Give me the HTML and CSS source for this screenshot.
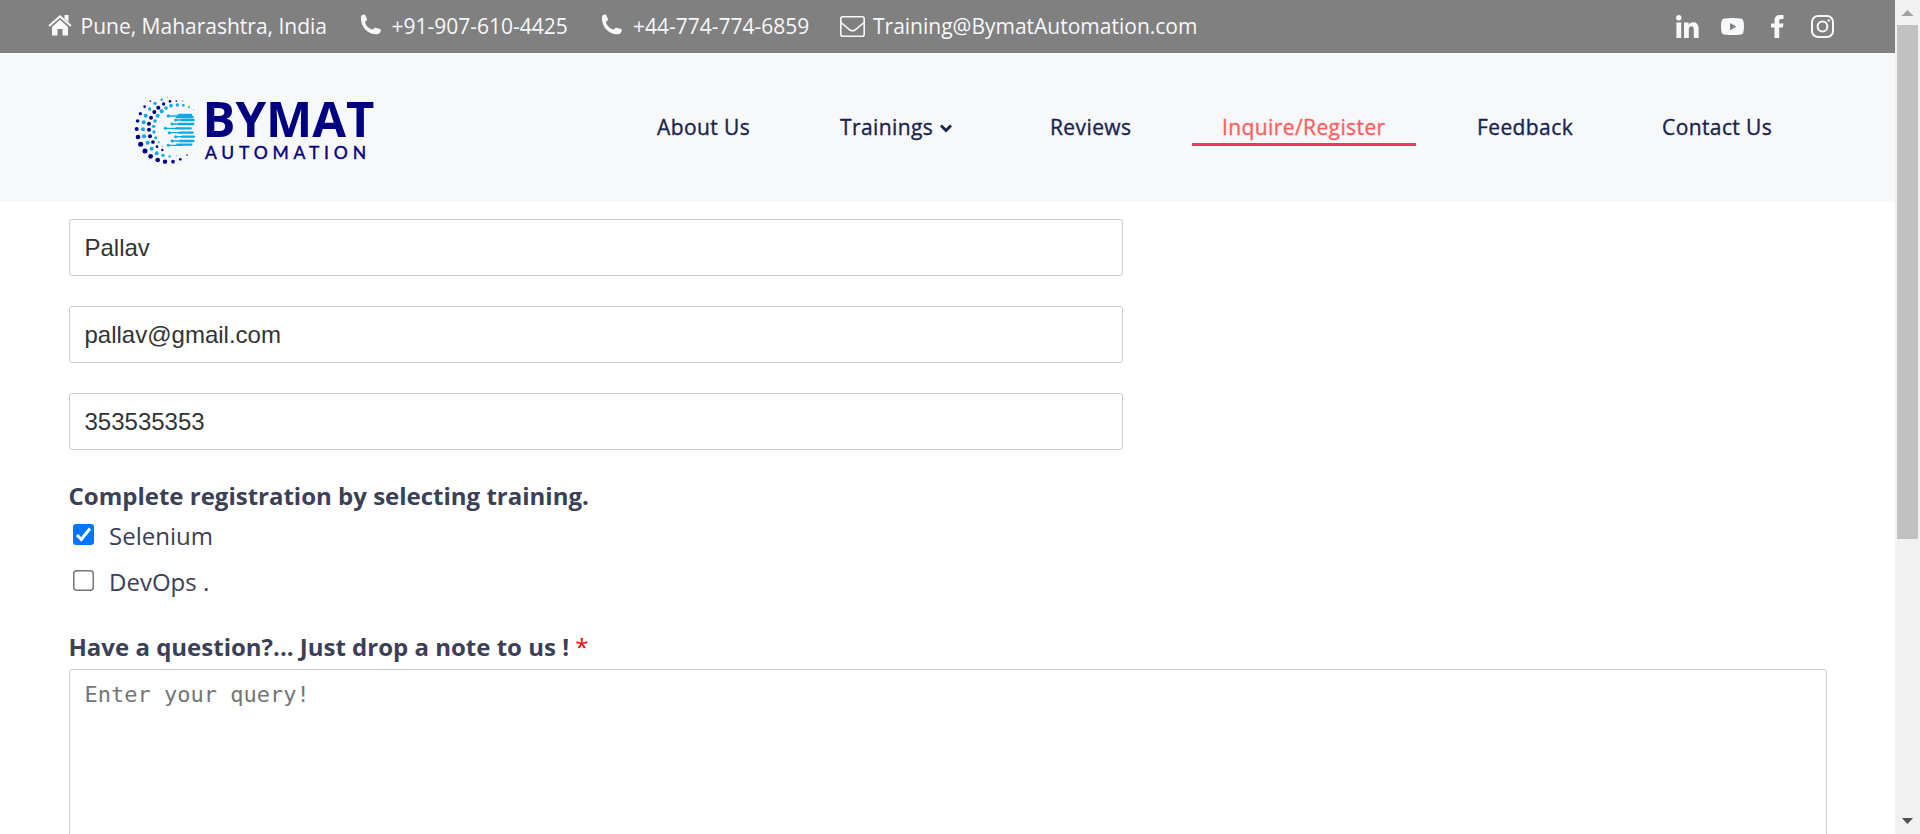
FILE: index.html
```html
<!DOCTYPE html>
<html lang="en">
<head>
<meta charset="utf-8">
<title>Bymat Automation - Inquire/Register</title>
<link rel="stylesheet" href="styles.css">
</head>
<body>
<div class="page">
  <main class="content">
    <div class="topbar">
      <span class="info i-home"><svg width="24" height="22" viewBox="0 0 24 22"><path d="M1 12 12 2.400 23 12" fill="none" stroke="currentColor" stroke-width="2"/><path d="M16.500 1h4v7l-4-3.500zM4 13l8-7.200L20 13v8.500h-5.500V15h-5v6.500H4z" fill="currentColor"/></svg><span>Pune, Maharashtra, India</span></span>
      <span class="info i-tel1"><svg width="21" height="25" viewBox="0 0 21 25"><path d="M1 3.500C1 1 4 0 5 1l2 5C7.200 8 4.800 8.500 5 10c1 4 4 7.200 7 8.400 1.500.4 1.700-2.400 3.500-2.100l4.700 1.700c1.500 1.400 0 5-2 5.800C9 26 0 15 1 3.500z" fill="currentColor"/></svg><span>+91-907-610-4425</span></span>
      <span class="info i-tel2"><svg width="21" height="25" viewBox="0 0 21 25"><path d="M1 3.500C1 1 4 0 5 1l2 5C7.200 8 4.800 8.500 5 10c1 4 4 7.200 7 8.400 1.500.4 1.700-2.400 3.500-2.100l4.700 1.700c1.500 1.400 0 5-2 5.800C9 26 0 15 1 3.500z" fill="currentColor" transform="scale(1 .84)"/></svg><span>+44-774-774-6859</span></span>
      <span class="info i-mail"><svg width="25" height="21" viewBox="0 0 25 21"><rect x=".8" y=".8" width="23.400" height="19.400" rx="2" fill="none" stroke="currentColor" stroke-width="1.600"/><path d="M1 6.500 10 14q2.500 1.600 5 0l9-7.500" fill="none" stroke="currentColor" stroke-width="1.600"/></svg><span>Training@BymatAutomation.com</span></span>
      <div class="social">
        <svg width="23" height="23" viewBox="0 0 23 23" fill="currentColor"><circle cx="2.800" cy="2.800" r="2.700"/><path d="M.4 7.500h4.800V23H.4zM8 7.500h4.600v2.200c2-3.500 10-4 10 3.800V23h-4.800v-8.400c0-4.600-5-4-5 0V23H8z"/></svg>
        <svg width="23" height="17" viewBox="0 0 23 17"><path fill="currentColor" fill-rule="evenodd" d="M3 .5q8.500-1 17 0 3 0 3 8t-3 8q-8.500 1-17 0-3 0-3-8t3-8zM9 5v7.200l6.400-3.600z"/></svg>
        <svg width="13" height="23" viewBox="0 0 13 23"><path fill="currentColor" d="M3.500 23V12.500H0v-4h3.500V5.500C3.500 2 5.500 0 9 0h3.500v4h-2.300C8.400 4 8.200 5 8.200 6v2.500h4.300l-.6 4H8.200V23z"/></svg>
        <svg width="23" height="23" viewBox="0 0 23 23" fill="none" stroke="currentColor" stroke-width="2"><rect x="1" y="1" width="21" height="21" rx="6"/><circle cx="11.500" cy="11.500" r="4.900"/><circle cx="17.700" cy="5.500" r="1.300" fill="currentColor" stroke="none"/></svg>
      </div>
    </div>
    <header class="header">
      <svg class="logo" width="246" height="76" viewBox="0 0 246 76">
        <g transform="scale(.3333) translate(-12 0)">
          <g id="dots"></g>
          <g class="chip">
            <path class="thin" d="M115 72h40M137 84h30M126 96h30M106 109h50M118 122h40M137 134h30M126 147h30M115 160h40"/>
            <path class="thick" d="M147 69h36M140 75h48M155 84h36M146 96h44M140 109h42M148 122h40M156 134h36M150 147h40M142 158h42"/>
          </g>
        </g>
        <text class="brand" x="68.500" y="45" textLength="172" lengthAdjust="spacingAndGlyphs">BYMAT</text>
        <text class="sub" x="71" y="67" textLength="161">AUTOMATION</text>
      </svg>
      <nav class="nav">
        <a>About Us</a>
        <a>Trainings<svg class="chev" width="12" height="9" viewBox="0 0 12 9"><path d="m1 1.500 5 5 5-5" fill="none" stroke="currentColor" stroke-width="2.800"/></svg></a>
        <a>Reviews</a>
        <a class="active">Inquire/Register</a>
        <a>Feedback</a>
        <a>Contact Us</a>
      </nav>
    </header>
    <form class="form">
      <input class="field" type="text" value="Pallav">
      <input class="field" type="text" value="pallav@gmail.com">
      <input class="field" type="text" value="353535353">
      <div class="title">Complete registration by selecting training.</div>
      <label class="option"><svg width="21" height="21" viewBox="0 0 21 21"><rect width="21" height="21" rx="3" fill="#0075ff"/><path d="m4 11 4.300 4.500L17 4.500" fill="none" stroke="#fff" stroke-width="3"/></svg>Selenium</label>
      <label class="option"><svg width="21" height="21" viewBox="0 0 21 21"><rect x=".75" y=".75" width="19.500" height="19.500" rx="3" fill="#fff" stroke="#767676" stroke-width="1.500"/></svg>DevOps .</label>
      <div class="title t2">Have a question?... Just drop a note to us ! <span class="req">*</span></div>
      <textarea class="query" placeholder="Enter your query!"></textarea>
    </form>
  </main>
  <div class="scroll">
    <svg width="25" height="25" viewBox="0 0 25 25"><path d="M6.500 16h12L12.500 10z" fill="#a0a0a0"/></svg>
    <div class="thumb"></div>
    <svg class="down" width="25" height="25" viewBox="0 0 25 25"><path d="M7 9h11l-5.500 6z" fill="#4f4f4f"/></svg>
  </div>
</div>
<script src="logo.js"></script>
</body>
</html>
```
FILE: styles.css
```css
* { box-sizing: border-box; }
body { margin: 0; overflow: hidden; background: #fff; font-family: "Open Sans", sans-serif; }
.page { display: flex; width: 1920px; height: 834px; overflow: hidden; }
.content { width: 1895px; height: 834px; overflow: hidden; }
.topbar { display: flex; height: 53px; padding-left: 48px; background: #808080; color: #f7f8fa; font-size: 21px; line-height: 53px; }
.info { display: flex; align-items: center; white-space: nowrap; }
.info svg { flex: none; }
.i-home { width: 312px; gap: 8.5px; }
.i-tel1 { width: 241px; gap: 10.5px; }
.i-tel2 { width: 239px; gap: 11px; }
.i-mail { gap: 8px; }
.i-tel1 svg, .i-tel2 svg { height: 21px; margin-bottom: 5px; }
.i-home svg { margin-bottom: 4px; }
.i-mail svg { margin-bottom: 1px; }
.social { display: flex; align-items: center; margin-left: auto; padding-right: 61px; }
.social svg:nth-child(2) { margin-left: 22px; }
.social svg:nth-child(3) { margin-left: 27px; }
.social svg:nth-child(4) { margin-left: 27px; }
.header { display: flex; height: 149px; background: #f7f8fa; }
.logo { flex: none; margin: 39px 0 0 134px; overflow: visible; }
.chip { fill: none; stroke: #0fa9e6; stroke-linecap: round; }
.thin { stroke-width: 4; }
.thick { stroke-width: 7; }
.brand { font: 700 49px "Open Sans", sans-serif; fill: #000080; }
.sub { font: 400 17.5px Lato, sans-serif; fill: #000080; stroke: #000080; stroke-width: .4px; }
.nav { display: grid; grid-template-columns: 183px 210px 172px 255px 185px 150px; align-items: center; height: 147px; margin-left: 277px; font-size: 21px; letter-spacing: .4px; color: #17234e; -webkit-text-stroke: .35px currentColor; }
.nav a { white-space: nowrap; line-height: 30px; }
.chev { margin-left: 7px; vertical-align: 2px; }
.active { position: relative; color: #ff5f5f; }
.active::after { content: ""; position: absolute; left: -30px; top: 31px; width: 224px; height: 3px; background: #ff2f64; }
.form { display: flex; flex-direction: column; padding: 17px 68px 0 69px; color: #3b4057; }
.field { width: 1054px; height: 57px; margin-bottom: 30px; padding: 0 14.5px; border: 1px solid #ccc; border-radius: 3px; font: 24px "Liberation Sans", Arial, sans-serif; color: #333; outline: none; }
.title { margin-left: -.5px; font-size: 24px; font-weight: 700; line-height: 32px; white-space: nowrap; }
.option { display: flex; align-items: center; height: 46px; gap: 15px; padding-left: 4px; font-size: 24px; }
.option svg { margin-bottom: 2px; }
.t2 { margin-top: 27px; }
.req { color: #f00; font-weight: 400; }
.query { width: 1758px; height: 180px; margin-top: 6px; padding: 9px 14.5px; border: 1px solid #ccc; border-radius: 3px; font: 22px/32px "DejaVu Sans Mono", monospace; resize: none; overflow: hidden; }
.query::placeholder { color: #757575; }
.scroll { display: flex; flex-direction: column; align-items: center; width: 25px; background: #f1f1f1; }
.scroll svg { flex: none; }
.thumb { width: 21px; height: 514px; background: #c1c1c1; }
.down { margin-top: auto; }
#dots { stroke: none; }
.i-tel1 path { transform: scale(1, .84); }
.i-tel1 svg, .i-tel2 svg { overflow: hidden; height: 25px; margin-bottom: 1px; }
```
FILE: logo.js
```javascript
// Each dot is [x, y, radius]; sizes taper towards the ends of every arc.
const navy = [
  [61,27,2.5],[44,44,4],[31,65,5],[23,87,5.5],[20,111,6],[24,135,7],[32,157,7.5],[45,177,7.5],
  [62,193,7],[83,204,7],[105,209,6.5],[129,209,5.5],[151,202,4],[171,189,2.5],
  [139,27,2.5],[120,28,4],[101,36,5],[85,47,6],[73,60,6],[63,77,6],[57,95,6],[57,113,6],
  [60,133,6],[69,150,5.5],[81,164,4],[97,174,3.5]
];
const cyan = [
  [112,16,1.5],[95,23,3.5],[75,34,5],[59,51,5],[47,71,6],[41,91,6],[39,112,6],[42,133,6.5],
  [53,152,6],[65,170,6],[80,184,6],[99,190,5],[119,193,3.5],[140,190,1.5],
  [158,27,2],[177,45,3],[191,53,1.5],[160,40,4],[142,39,5],[123,41,5.5],[108,48,5.5],
  [95,58,6],[83,71,6],[75,87,5.5],[71,103,5],[72,120,5],[77,137,4.5],[86,151,3],[97,163,2],
  [115,72,5],[137,84,4.5],[126,96,4.5],[106,109,4.5],[118,122,4.5],[137,134,4.5],[126,147,4.5],[115,160,4.5]
];
const group = document.getElementById("dots");
function draw(list, color) {
  for (const [x, y, r] of list) {
    const c = document.createElementNS("http://www.w3.org/2000/svg", "circle");
    c.setAttribute("cx", x);
    c.setAttribute("cy", y);
    c.setAttribute("r", r);
    c.setAttribute("fill", color);
    group.appendChild(c);
  }
}
draw(navy, "#000080");
draw(cyan, "#0fa9e6");
```
